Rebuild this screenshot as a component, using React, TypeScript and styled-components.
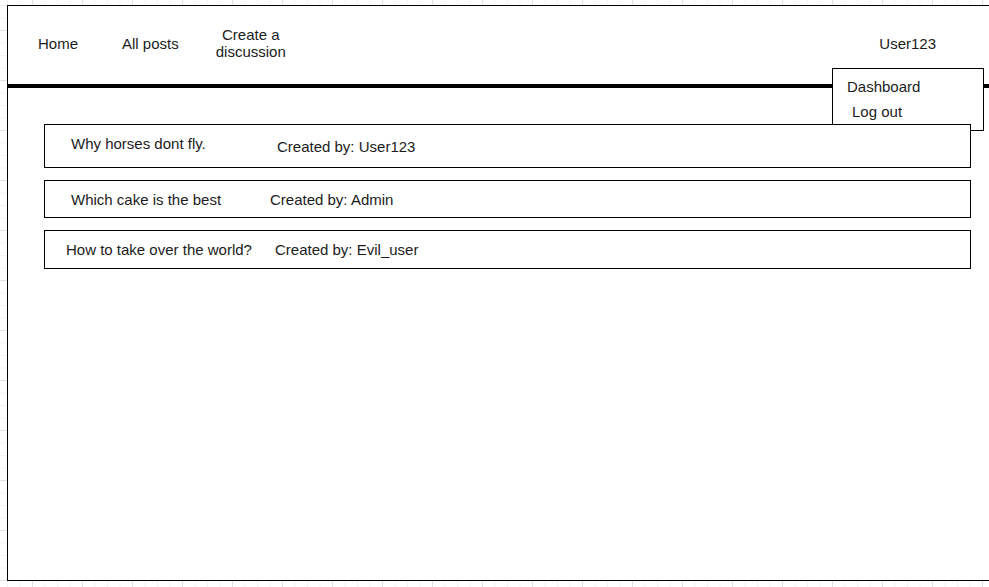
import React from "react";
import styled, { createGlobalStyle } from "styled-components";

const GlobalStyle = createGlobalStyle`
  html, body {
    margin: 0;
    padding: 0;
    width: 989px;
    height: 587px;
    overflow: hidden;
  }
  body {
    font-family: "Liberation Sans", Arial, Helvetica, sans-serif;
    color: #1c1c1c;
    background-color: #ffffff;
    background-image:
      linear-gradient(to right, #e3e3e3 1px, transparent 1px),
      linear-gradient(to bottom, #e3e3e3 1px, transparent 1px),
      linear-gradient(to right, #f2f2f2 1px, transparent 1px),
      linear-gradient(to bottom, #f2f2f2 1px, transparent 1px);
    background-size: 50px 50px, 50px 50px, 12.5px 12.5px, 12.5px 12.5px;
    background-position: 32px 30px, 32px 30px, 32px 30px, 32px 30px;
  }
`;

const Page = styled.div`
  padding: 5px 0 0 7px;
`;

const Frame = styled.div`
  position: relative;
  box-sizing: border-box;
  width: 993px;
  height: 576px;
  background: #fff;
  border: 1px solid #000;
  border-right: none;
`;

const Header = styled.header`
  box-sizing: border-box;
  display: flex;
  align-items: center;
  height: 78px;
  padding: 0 64px 4px 30px;
  font-size: 15px;
  line-height: 17px;
`;

const NavItem = styled.span<{ $gap?: number }>`
  margin-left: ${(p) => p.$gap ?? 0}px;
  text-align: center;
  white-space: nowrap;
`;

const UserName = styled.span`
  margin-left: auto;
  white-space: nowrap;
`;

const Rule = styled.div`
  height: 4px;
  background: #000;
`;

const Dropdown = styled.div`
  position: absolute;
  left: 824px;
  top: 62px;
  z-index: 1;
  box-sizing: border-box;
  width: 152px;
  height: 63px;
  background: #fff;
  border: 1px solid #000;
  display: flex;
  flex-direction: column;
  padding-top: 9px;
  gap: 8px;
  font-size: 15px;
  line-height: 17px;
`;

const MenuItem = styled.span<{ $indent: number }>`
  padding-left: ${(p) => p.$indent}px;
`;

const PostList = styled.main`
  display: flex;
  flex-direction: column;
  gap: 12px;
  padding: 36px 0 0 36px;
`;

const PostRow = styled.div<{ $height: number }>`
  position: relative;
  z-index: 2;
  box-sizing: border-box;
  width: 927px;
  height: ${(p) => p.$height}px;
  background: #fff;
  border: 1px solid #000;
  display: flex;
  align-items: flex-start;
  font-size: 15px;
  line-height: 17px;
`;

const Title = styled.span<{ $left: number; $width: number; $top: number }>`
  flex: none;
  margin-left: ${(p) => p.$left}px;
  width: ${(p) => p.$width}px;
  margin-top: ${(p) => p.$top}px;
  white-space: nowrap;
`;

const Creator = styled.span<{ $top: number }>`
  margin-top: ${(p) => p.$top}px;
  white-space: nowrap;
`;

type Post = {
  title: string;
  author: string;
  height: number;
  left: number;
  width: number;
  titleTop: number;
  creatorTop: number;
};

const posts: Post[] = [
  { title: "Why horses dont fly.", author: "User123", height: 44, left: 26, width: 206, titleTop: 10, creatorTop: 13 },
  { title: "Which cake is the best", author: "Admin", height: 38, left: 26, width: 199, titleTop: 10, creatorTop: 10 },
  { title: "How to take over the world?", author: "Evil_user", height: 39, left: 21, width: 209, titleTop: 10, creatorTop: 10 },
];

export default function App() {
  return (
    <>
      <GlobalStyle />
      <Page>
        <Frame>
          <Header>
            <NavItem>Home</NavItem>
            <NavItem $gap={44}>All posts</NavItem>
            <NavItem $gap={37}>
              Create a
              <br />
              discussion
            </NavItem>
            <UserName>User123</UserName>
          </Header>
          <Rule />
          <Dropdown>
            <MenuItem $indent={14}>Dashboard</MenuItem>
            <MenuItem $indent={19}>Log out</MenuItem>
          </Dropdown>
          <PostList>
            {posts.map((p) => (
              <PostRow key={p.title} $height={p.height}>
                <Title $left={p.left} $width={p.width} $top={p.titleTop}>
                  {p.title}
                </Title>
                <Creator $top={p.creatorTop}>Created by: {p.author}</Creator>
              </PostRow>
            ))}
          </PostList>
        </Frame>
      </Page>
    </>
  );
}
